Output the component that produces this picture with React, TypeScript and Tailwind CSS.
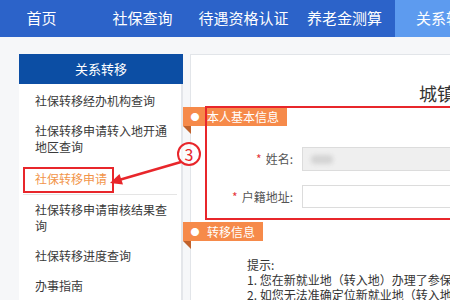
import React from "react";

const navItems = ["首页", "社保查询", "待遇资格认证", "养老金测算", "关系转移"];

const sideItems = [
  "社保转移经办机构查询",
  "社保转移申请转入地开通地区查询",
  "社保转移申请",
  "社保转移申请审核结果查询",
  "社保转移进度查询",
  "办事指南",
];

function SectionTag({ title }: { title: string }) {
  return (
    <div className="relative -ml-[8px] flex">
      <div className="flex h-[19px] items-center bg-[#f68a4a] pr-[8px] text-[12px] leading-none text-white">
        <span className="w-[24px] text-center text-[9px]">●</span>
        <span>{title}</span>
      </div>
      <div className="absolute left-0 top-[19px] h-0 w-0 border-l-[8px] border-t-[8px] border-l-transparent border-t-[#c0622c]" />
    </div>
  );
}

export default function App() {
  return (
    <div className="relative h-[300px] w-[450px] overflow-hidden bg-[#f6f7f9] font-['Microsoft_YaHei','Noto_Sans_CJK_SC',sans-serif] text-[#333]">
      {/* top nav */}
      <div className="flex h-[37px] bg-[#2c63c9]">
        <div className="-ml-[9px] flex">
          {navItems.map((item, i) => (
            <div
              key={item}
              className={`flex w-[101px] shrink-0 items-center justify-center whitespace-nowrap text-[15px] text-white ${
                i === navItems.length - 1 ? "w-[120px] justify-start bg-[#5d9bef] pl-[21px] text-[#e8f1ff]" : ""
              }`}
            >
              {item}
            </div>
          ))}
        </div>
      </div>

      <div className="flex gap-[7px] pl-[19px] pt-[17px]">
        {/* sidebar */}
        <div className="w-[164px] shrink-0">
          <div className="flex h-[30px] items-center justify-center bg-[#0c4ea4] text-[13px] text-white">
            关系转移
          </div>
          <div className="h-[240px] border-r-2 border-[#e4e6ea] bg-white pt-[2px]">
            {sideItems.map((item, i) => (
              <div
                key={item}
                className={`mx-[4px] pl-[12px] pr-[6px] text-[12px] leading-4 ${
                  i === 2
                    ? "border-b border-[#e5e5e5] pb-[7px] pt-[9px] text-[#f2954a]"
                    : "py-[7px] text-[#3a3a3a]"
                }`}
              >
                {item}
              </div>
            ))}
          </div>
        </div>

        {/* main panel */}
        <div className="h-[260px] w-[420px] shrink-0 border border-[#e2e5e9] bg-white">
          <div className="mt-[28px] whitespace-nowrap pl-[228px] text-[18px] leading-[20px] text-[#333]">
            城镇职工基本养老保险关系转移
          </div>

          <div className="mt-[4px]">
            <SectionTag title="本人基本信息" />
          </div>

          <div className="mt-[21px] flex items-center">
            <div className="w-[111px] pr-[9px] text-right text-[12px] text-[#555]">
              <span className="mr-[4px] text-[#e5383b]">*</span>姓名:
            </div>
            <div className="flex h-[24px] w-[200px] items-center border border-[#dcdcdc] bg-[#efefef] pl-[8px]">
              <div className="h-[9px] w-[22px] rounded-sm bg-[#d4d4d4] blur-[2px]" />
            </div>
          </div>

          <div className="mt-[14px] flex items-center">
            <div className="w-[111px] pr-[9px] text-right text-[12px] text-[#555]">
              <span className="mr-[4px] text-[#e5383b]">*</span>户籍地址:
            </div>
            <div className="h-[23px] w-[200px] border border-[#dcdcdc] bg-white" />
          </div>

          <div className="mt-[14px]">
            <SectionTag title="转移信息" />
          </div>

          <div className="mt-[16px] whitespace-nowrap pl-[56px] text-[12px] leading-[15px] text-[#333]">
            <div>提示:</div>
            <div>1. 您在新就业地（转入地）办理了参保登记后，可申请转移</div>
            <div>2. 如您无法准确定位新就业地（转入地）的经办机构</div>
          </div>
        </div>
      </div>

      {/* annotations */}
      <div className="absolute left-[23px] top-[167px] h-[26px] w-[91px] border-2 border-[#e8262b]" />
      <div className="absolute left-[205px] top-[106px] h-[114px] w-[260px] border-2 border-[#e8262b]" />
      <div className="absolute left-[177px] top-[142px] flex h-[24px] w-[24px] items-center justify-center rounded-full border-2 border-[#e8262b] bg-white/60 text-[16px] leading-none text-[#e8262b]">
        3
      </div>
      <svg className="absolute left-0 top-0" width="450" height="300" viewBox="0 0 450 300">
        <line x1="181" y1="162" x2="119" y2="180" stroke="#e8262b" strokeWidth="2.5" />
        <polygon points="110,183 123,184.5 119.5,174" fill="#e8262b" />
      </svg>
    </div>
  );
}
